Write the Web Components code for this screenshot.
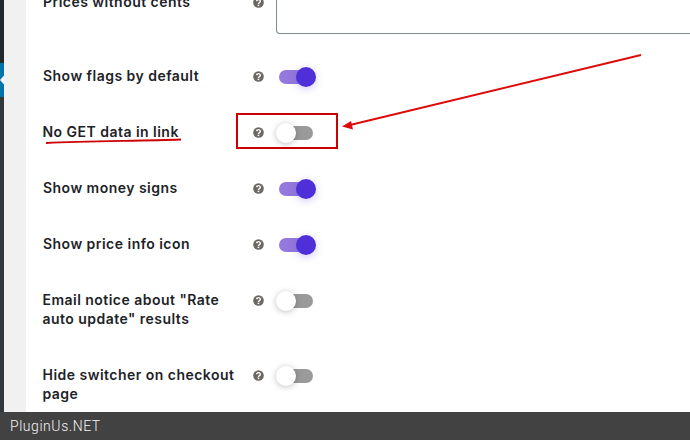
<!DOCTYPE html>
<html><head><meta charset="utf-8"><style>
html,body{margin:0;height:100%;overflow:hidden;background:#fff}
</style></head><body>
<settings-page>
<setting-row h="74" box style="margin-top:-8px">Prices without cents</setting-row>
<setting-row h="56" on>Show flags by default</setting-row>
<setting-row h="56" nudge>No GET data in link</setting-row>
<setting-row h="56" on>Show money signs</setting-row>
<setting-row h="56" on>Show price info icon</setting-row>
<setting-row h="75" nudge>Email notice about "Rate auto update" results</setting-row>
<setting-row h="56" nudge>Hide switcher on checkout page</setting-row>
</settings-page>
<script>
class Help extends HTMLElement{constructor(){super();this.attachShadow({mode:'open'}).innerHTML=`<style>:host{display:block;width:11px;height:11px}svg{display:block}</style><svg width="11" height="11" viewBox="0 0 11 11"><circle cx="5.500" cy="5.500" r="5.300" fill="#6b6762"/><path d="M3.700 4.300a1.800 1.600 0 1 1 2.800 1.300c-.7.4-1 .6-1 1.300" fill="none" stroke="#fff" stroke-width="1.400"/><rect x="4.700" y="7.600" width="1.600" height="1.500" fill="#fff"/></svg>`}}
customElements.define('help-icon',Help);
class Toggle extends HTMLElement{constructor(){super();this.attachShadow({mode:'open'}).innerHTML=`<style>
:host{display:block;width:40px;height:20px;position:relative}
.t{position:absolute;left:3px;top:3px;width:34px;height:14px;border-radius:7px;background:#9a9a9a}
.k{position:absolute;left:0;top:0;width:20px;height:20px;border-radius:50%;background:#fff;box-shadow:0 1px 6px rgba(0,0,0,.25)}
:host([on]) .t{background:#9478dc}
:host([on]) .k{left:20px;background:#4f2fd8;box-shadow:0 2px 8px rgba(79,47,216,.25)}
</style><div class="t"></div><div class="k"></div>`}}
customElements.define('toggle-switch',Toggle);
class Row extends HTMLElement{connectedCallback(){if(this.shadowRoot)return;const on=this.hasAttribute('on'),box=this.hasAttribute('box');this.attachShadow({mode:'open'}).innerHTML=`<style>
:host{display:grid;grid-template-columns:210px 11px 1fr;column-gap:0;align-items:start;height:${this.getAttribute('h')}px;font:600 14px/19px Inter,"Liberation Sans",sans-serif;color:#1d2327;letter-spacing:.47px}
.l{padding:0 12px 0 0${this.hasAttribute('nudge')?';margin-left:-.5px':''}}
help-icon{margin:5px 0 0 0}
toggle-switch{margin:1px 0 0 12px}
.box{margin:-9px 0 0 12px;height:51px;box-sizing:border-box;border:1px solid #7e8993;border-right:0;border-top:0;border-radius:0 0 0 4px}
</style><div class="l"><slot></slot></div><help-icon></help-icon>${box?'<div class="box"></div>':`<toggle-switch${on?' on':''}></toggle-switch>`}`}}
customElements.define('setting-row',Row);
class Page extends HTMLElement{constructor(){super();this.attachShadow({mode:'open'}).innerHTML=`<style>
:host{display:block;height:440px;position:relative;overflow:hidden}
.wrap{display:grid;grid-template-columns:4px 22px 1fr;height:412px}
.ad{background:#32373c;position:relative}.ad::before{content:"";position:absolute;left:0;top:0;width:4px;height:63px;background:#23282d}
.tab{position:absolute;left:0;top:63px}
.g{background:#f1f1f1}
.main{padding:0 0 0 17px;overflow:hidden}
.foot{height:28px;background:#424242;color:#f4f4f4;font:300 14px/28px Roboto,sans-serif;padding-left:10px;letter-spacing:.55px}
svg.ann{position:absolute;left:0;top:0;pointer-events:none}
</style><div class="wrap"><div class="ad"><svg class="tab" width="4" height="34"><rect width="4" height="34" fill="#0073aa"/><path d="M0 17L4 12.500V21.500Z" fill="#f1f1f1"/></svg></div><div class="g"></div><div class="main"><slot></slot></div></div><div class="foot">PluginUs.NET</div>
<svg class="ann" width="690" height="440"><rect x="237" y="114" width="100" height="34" fill="none" stroke="#cc0000" stroke-width="2"/>
<path d="M46 143C90 141 140 141 181 139.500" fill="none" stroke="#cc0000" stroke-width="1.800"/>
<path d="M641 55L350 125" stroke="#dd0a0a" stroke-width="1.800"/><path d="M342 126.500L351 121L353 129.500Z" fill="#dd0a0a"/></svg>`}}
customElements.define('settings-page',Page);
</script></body></html>
